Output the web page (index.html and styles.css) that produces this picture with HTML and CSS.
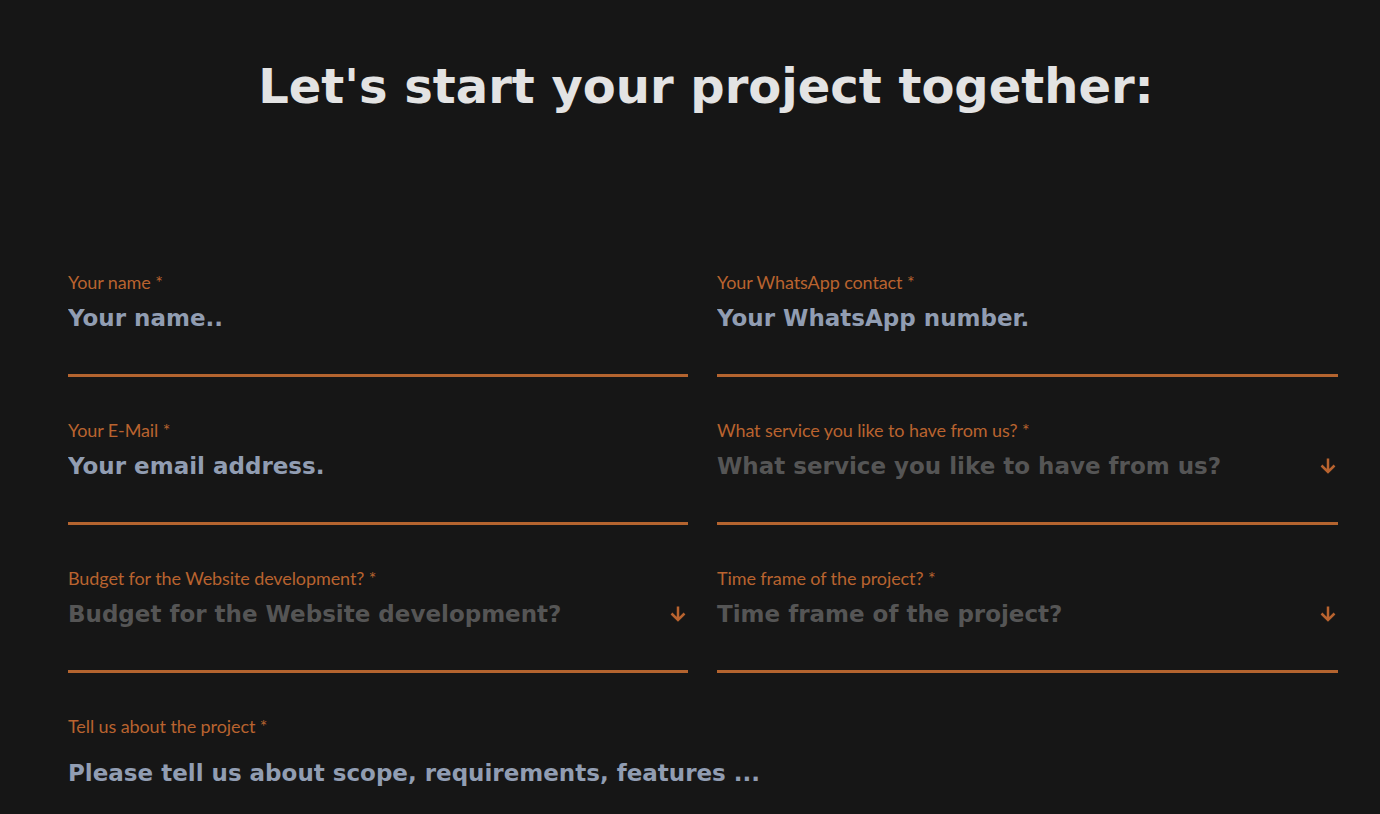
FILE: index.html
```html
<!DOCTYPE html>
<html lang="en">
<head>
<meta charset="utf-8">
<title>Let's start your project together</title>
<link rel="stylesheet" href="styles.css">
</head>
<body>
<main class="page">
  <h1 class="title">Let's start your project together:</h1>
  <form class="form">
    <div class="grid">
      <label class="field">
        <span class="label">Your name *</span>
        <input class="control" type="text" placeholder="Your name..">
      </label>
      <label class="field">
        <span class="label">Your WhatsApp contact *</span>
        <input class="control" type="text" placeholder="Your WhatsApp number.">
      </label>
      <label class="field">
        <span class="label">Your E-Mail *</span>
        <input class="control" type="email" placeholder="Your email address.">
      </label>
      <label class="field">
        <span class="label">What service you like to have from us? *</span>
        <span class="select">
          <span class="select-text">What service you like to have from us?</span>
          <svg class="arrow" width="16" height="17" viewBox="0 0 16 17"><path d="M8 1.5V15M1.5 8.5L8 15L14.5 8.5" fill="none" stroke="#b8632f" stroke-width="2.5"/></svg>
        </span>
      </label>
      <label class="field">
        <span class="label">Budget for the Website development? *</span>
        <span class="select">
          <span class="select-text">Budget for the Website development?</span>
          <svg class="arrow" width="16" height="17" viewBox="0 0 16 17"><path d="M8 1.5V15M1.5 8.5L8 15L14.5 8.5" fill="none" stroke="#b8632f" stroke-width="2.5"/></svg>
        </span>
      </label>
      <label class="field">
        <span class="label">Time frame of the project? *</span>
        <span class="select">
          <span class="select-text">Time frame of the project?</span>
          <svg class="arrow" width="16" height="17" viewBox="0 0 16 17"><path d="M8 1.5V15M1.5 8.5L8 15L14.5 8.5" fill="none" stroke="#b8632f" stroke-width="2.5"/></svg>
        </span>
      </label>
    </div>
    <label class="field field-wide">
      <span class="label">Tell us about the project *</span>
      <textarea class="area" placeholder="Please tell us about scope, requirements, features ..."></textarea>
    </label>
  </form>
</main>
</body>
</html>
```
FILE: styles.css
```css
* { box-sizing: border-box; }
html, body { margin: 0; background: #161616; }
body { font-family: "DejaVu Sans", sans-serif; overflow: hidden; height: 814px; }
.page { padding: 56px 42px 0 68px; }
.title {
  margin: 0;
  text-align: center;
  color: #e3e3e3;
  font-family: "DejaVu Sans", sans-serif;
  font-weight: 700;
  font-size: 48px;
  line-height: 60px;
  letter-spacing: 0;
  padding-left: 6px;
}
.form { margin-top: 154px; }
.grid {
  display: grid;
  grid-template-columns: 620px 1fr;
  column-gap: 29px;
  row-gap: 41px;
}
.field { display: flex; flex-direction: column; }
.label {
  color: #b9632f;
  font-family: Lato, sans-serif;
  font-weight: 400;
  font-size: 18px;
  line-height: 24px;
  letter-spacing: -0.1px;
}
.control, .select {
  height: 83px;
  border: 0;
  border-bottom: 3px solid #b4642f;
  background: transparent;
  padding: 10px 0 42px;
  font-family: "DejaVu Sans", sans-serif;
  font-weight: 700;
  font-size: 23px;
  line-height: 28px;
  letter-spacing: 0;
  color: #919db2;
  outline: none;
  width: 100%;
}
.control::placeholder { color: #919db2; opacity: 1; }
.select { display: flex; align-items: flex-start; justify-content: space-between; color: #555555; }
.arrow { margin-top: 5px; margin-right: 2px; flex: none; }
.field-wide { margin-top: 41px; }
.area {
  height: 120px;
  border: 0;
  background: transparent;
  resize: none;
  padding: 21px 0 0;
  font-family: "DejaVu Sans", sans-serif;
  font-weight: 700;
  font-size: 23px;
  line-height: 28px;
  letter-spacing: 0;
  color: #919db2;
  outline: none;
}
.area::placeholder { color: #919db2; opacity: 1; }
```
